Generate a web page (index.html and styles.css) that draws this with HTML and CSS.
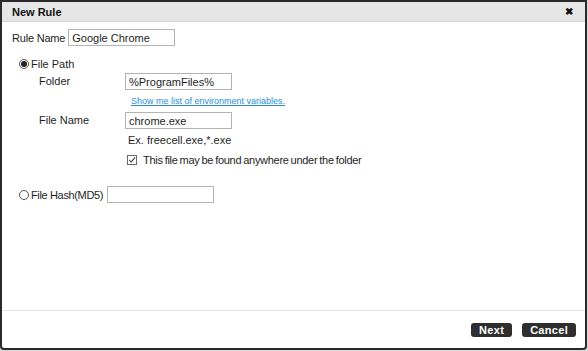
FILE: index.html
```html
<!DOCTYPE html>
<html lang="en">
<head>
    <meta charset="UTF-8">
    <title>New Rule</title>
    <link rel="stylesheet" href="styles.css">
</head>
<body>

    <div class="dialog">
        <div class="dialog-title">
            <span>New Rule</span>
            <span class="close">&#x2716;</span>
        </div>

        <div class="dialog-body">
            <div class="rule-name">
                <label>Rule Name</label>
                <input type="text" class="field" value="Google Chrome">
            </div>

            <div class="option">
                <span class="radio checked"></span>
                <span>File Path</span>
            </div>

            <div class="path-grid">
                <label class="row-folder">Folder</label>
                <input type="text" class="field row-folder" value="%ProgramFiles%">

                <a href="#" class="env-link">Show me list of environment variables.</a>

                <label class="row-file">File Name</label>
                <input type="text" class="field row-file" value="chrome.exe">

                <div class="hint">Ex. freecell.exe,*.exe</div>

                <div class="check-row">
                    <span class="checkbox">
                        <svg width="10" height="10" viewBox="0 0 10 10">
                            <path d="M1.5 5 L4 7.5 L8.8 1.8" fill="none" stroke="#333" stroke-width="1.3"/>
                        </svg>
                    </span>
                    <span class="check-text">This file may be found anywhere under the folder</span>
                </div>
            </div>

            <div class="option hash-row">
                <span class="radio"></span>
                <span class="hash-label">File Hash(MD5)</span>
                <input type="text" class="field">
            </div>
        </div>

        <div class="dialog-footer">
            <button class="btn">Next</button>
            <button class="btn">Cancel</button>
        </div>
    </div>

</body>
</html>
```

FILE: styles.css
```css
body {
    margin: 0;
    padding: 0;
    font-family: "Liberation Sans", Arial, sans-serif;
    font-size: 11px;
    color: #1e1e1e;
    background: #d9d9d9;
}
.dialog {
    width: 583px;
    height: 346px;
    border: 2px solid #2a2a2a;
    border-radius: 0 0 4px 4px;
    background: #fff;
    display: flex;
    flex-direction: column;
}
.dialog-title {
    height: 19px;
    background: #e6e6e6;
    border-bottom: 1px solid #d2d2d2;
    display: flex;
    align-items: center;
    justify-content: space-between;
    padding: 0 12px 0 10px;
    font-weight: bold;
    color: #111;
}
.close {
    font-size: 10px;
    color: #111;
}
.dialog-body {
    flex: 1;
    padding: 7px 0 0 10px;
}
.rule-name {
    display: flex;
    align-items: center;
    gap: 3px;
    height: 17px;
}
.rule-name label {
    letter-spacing: -0.2px;
}
.field {
    width: 107px;
    height: 17px;
    box-sizing: border-box;
    border: 1px solid #b4b4b4;
    padding: 0 3px;
    margin: 0;
    font-family: inherit;
    font-size: 11px;
    color: #1e1e1e;
    outline: none;
}
.option {
    display: flex;
    align-items: center;
    gap: 2px;
    margin-top: 11px;
    padding-left: 7px;
    height: 14px;
}
.radio {
    width: 10px;
    height: 10px;
    box-sizing: border-box;
    border: 1px solid #555;
    border-radius: 50%;
    display: flex;
    align-items: center;
    justify-content: center;
}
.radio.checked::after {
    content: "";
    width: 6px;
    height: 6px;
    border-radius: 50%;
    background: #222;
}
.path-grid {
    display: grid;
    grid-template-columns: 86px auto;
    justify-content: start;
    align-items: center;
    padding-left: 27px;
    margin-top: 2px;
}
.path-grid label {
    height: 17px;
    line-height: 17px;
}
.env-link {
    grid-column: 2;
    margin: 5px 0 5px 6px;
    font-size: 9px;
    line-height: 12px;
    color: #2a8fd3;
    text-decoration: underline;
}
.hint {
    grid-column: 2;
    margin: 4px 0 0 3px;
    line-height: 14px;
}
.check-row {
    grid-column: 2;
    display: flex;
    align-items: center;
    gap: 6px;
    margin: 6px 0 0 2px;
    line-height: 14px;
}
.check-text {
    letter-spacing: -0.3px;
    word-spacing: -0.7px;
}
.checkbox {
    width: 10px;
    height: 10px;
    box-sizing: border-box;
    border: 1px solid #6a6a6a;
    display: flex;
}
.checkbox svg {
    width: 8px;
    height: 8px;
}
.hash-row {
    margin-top: 19px;
    height: 17px;
}
.hash-label {
    letter-spacing: -0.35px;
}
.hash-row .field {
    margin-left: 2px;
}
.dialog-footer {
    height: 37px;
    border-top: 1px solid #e4e4e4;
    display: flex;
    align-items: center;
    justify-content: flex-end;
    gap: 10px;
    padding-right: 9px;
}
.btn {
    height: 14px;
    padding: 0 8px;
    background: #2e2e2e;
    color: #fff;
    border: none;
    border-radius: 3px;
    font-family: inherit;
    font-size: 11px;
    font-weight: bold;
    line-height: 14px;
    letter-spacing: 0.3px;
}
```
